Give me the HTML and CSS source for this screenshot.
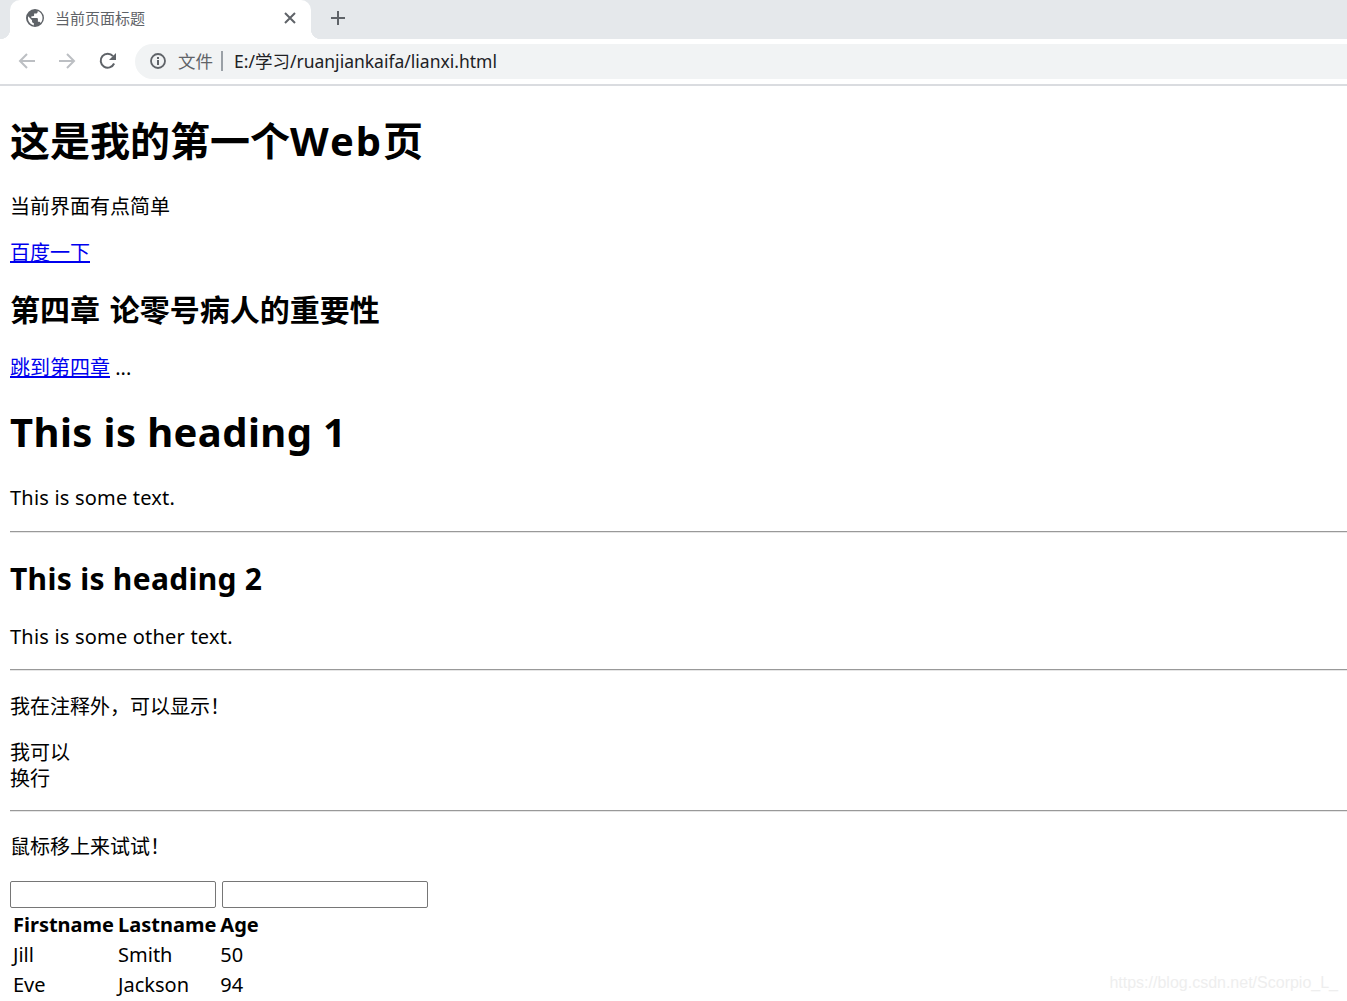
FILE: index.html
```html
<!DOCTYPE html>
<html lang="zh-CN">

<head>
    <meta charset="UTF-8">
    <meta name="viewport" content="width=device-width, initial-scale=1.0">
    <title>当前页面标题</title>
    <link rel="stylesheet" href="styles.css">
</head>

<body>
    <!-- Browser chrome -->
    <div class="tabstrip">
        <div class="tab">
            <svg class="tab-icon" width="20" height="20" viewBox="0 0 20 20">
                <path fill="#5f6368" fill-rule="evenodd" d="M10 1a9 9 0 1 0 0 18 9 9 0 0 0 0-18zM3.200 8.300L7 12.200v1c0 1 .8 1.800 1.800 1.800v2.500A7.600 7.600 0 0 1 3.200 8.300zm12.300 6.800c-.2-.8-.9-1.300-1.700-1.300h-.9v-2.900c0-.5-.4-.9-.9-.9H6.400V8.200h1.800c.5 0 .9-.4.900-.9V5.500h1.800c1 0 1.800-.8 1.800-1.800v-.8a7.600 7.600 0 0 1 2.800 12.200z" />
            </svg>
            <span class="tab-title">当前页面标题</span>
            <svg class="tab-close" width="14" height="14" viewBox="0 0 14 14">
                <path stroke="#5f6368" stroke-width="2" d="M2 2l10 10M12 2L2 12" />
            </svg>
        </div>
        <svg class="new-tab" width="16" height="16" viewBox="0 0 16 16">
            <path stroke="#5f6368" stroke-width="2" d="M8 1v14M1 8h14" />
        </svg>
    </div>

    <div class="toolbar">
        <svg class="nav-icon" width="20" height="20" viewBox="0 0 20 20">
            <path fill="none" stroke="#bcbfc3" stroke-width="2" d="M18 10H3M10 3l-7 7 7 7" />
        </svg>
        <svg class="nav-icon" width="20" height="20" viewBox="0 0 20 20">
            <path fill="none" stroke="#bcbfc3" stroke-width="2" d="M2 10h15M10 3l7 7-7 7" />
        </svg>
        <svg class="nav-icon reload" width="20" height="20" viewBox="0 0 20 20">
            <path fill="none" stroke="#5f6368" stroke-width="2" d="M16.100 12.500A7 7 0 1 1 15 5.100" />
            <path fill="#5f6368" d="M18 2v7h-7z" />
        </svg>
        <div class="omnibox">
            <svg width="18" height="18" viewBox="0 0 18 18">
                <circle cx="9" cy="9" r="7" fill="none" stroke="#5f6368" stroke-width="1.800" />
                <path fill="#5f6368" d="M8 8h2v5H8zM8 5h2v2H8z" />
            </svg>
            <span class="scheme">文件</span>
            <span class="sep"></span>
            <span class="url">E:/学习/ruanjiankaifa/lianxi.html</span>
        </div>
    </div>

    <!-- Isi halaman -->
    <div class="page">
        <h1 class="first">这是我的第一个<span class="web">Web</span>页</h1>
        <p>当前界面有点简单</p>
        <p><a href="#">百度一下</a></p>
        <h2 class="spaced">第四章 论零号病人的重要性</h2>
        <p><a href="#">跳到第四章</a> ...</p>
        <h1 class="en">This is heading 1</h1>
        <p class="en">This is some text.</p>
        <hr>
        <h2 class="en">This is heading 2</h2>
        <p class="en tight">This is some other text.</p>
        <hr>
        <p class="after-rule">我在注释外，可以显示！</p>
        <p class="tighter">我可以<br>换行</p>
        <hr>
        <p class="after-rule low" title="鼠标移上来试试">鼠标移上来试试！</p>
        <form class="name-form">
            <input type="text">
            <input type="text">
        </form>
        <table>
            <tr>
                <th>Firstname</th>
                <th>Lastname</th>
                <th>Age</th>
            </tr>
            <tr>
                <td>Jill</td>
                <td>Smith</td>
                <td>50</td>
            </tr>
            <tr>
                <td>Eve</td>
                <td>Jackson</td>
                <td>94</td>
            </tr>
        </table>
    </div>

    <div class="watermark">https://blog.csdn.net/Scorpio_L_</div>
</body>

</html>
```

FILE: styles.css
```css
html,
body {
    height: 100%;
    overflow: hidden;
}

body {
    margin: 0;
    position: relative;
    background-color: #ffffff;
    color: #000000;
    font-family: "Noto Sans", "Noto Sans CJK SC", sans-serif;
    font-size: 20px;
    line-height: 26px;
}

/* Browser chrome */
.tabstrip {
    display: flex;
    align-items: center;
    height: 39px;
    padding-left: 10px;
    background-color: #e5e8eb;
}

.tab {
    position: relative;
    display: flex;
    align-items: center;
    box-sizing: border-box;
    width: 301px;
    height: 39px;
    padding: 0 14px 3px 15px;
    background-color: #ffffff;
    border-radius: 10px 10px 0 0;
}

.tab::before,
.tab::after {
    content: "";
    position: absolute;
    bottom: 0;
    width: 10px;
    height: 10px;
}

.tab::before {
    left: -10px;
    background: radial-gradient(circle at 0 0, #e5e8eb 10px, #ffffff 10.500px);
}

.tab::after {
    right: -10px;
    background: radial-gradient(circle at 100% 0, #e5e8eb 10px, #ffffff 10.500px);
}

.tab-title {
    flex: 1;
    margin-left: 10px;
    color: #5f6368;
    font-size: 15px;
    line-height: 20px;
}

.new-tab {
    margin: 0 0 3px 19px;
}

.toolbar {
    display: flex;
    align-items: center;
    box-sizing: border-box;
    height: 47px;
    padding: 0 0 1px 17px;
    border-bottom: 2px solid #dadce0;
}

.nav-icon {
    margin-right: 20px;
}

.reload {
    margin-left: 1px;
    margin-right: 19px;
}

.omnibox {
    display: flex;
    align-items: center;
    flex: 1;
    height: 35px;
    margin-left: -2px;
    padding-left: 14px;
    background-color: #f1f3f4;
    border-radius: 18px 0 0 18px;
    font-size: 17.500px;
}

.scheme {
    margin-left: 11px;
    color: #5f6368;
}

.sep {
    width: 2px;
    height: 20px;
    margin: 0 11px 0 8px;
    background-color: #9aa0a6;
}

.url {
    color: #202124;
}

/* Isi halaman */
.page {
    padding-left: 10px;
}

h1 {
    margin: 24px 0 27px;
    font-size: 40px;
    line-height: 53px;
}

h1.first {
    margin-top: 28px;
}

h2 {
    margin: 24px 0 25px;
    font-size: 30px;
    line-height: 40px;
}

p {
    margin: 20px 0;
}

hr {
    margin: 20px 0;
    border: none;
    border-top: 1px solid #999999;
    border-bottom: 1px solid #e6e6e6;
}

hr + h2 {
    margin-top: 26px;
}

.en {
    letter-spacing: 0.01em;
}

.web {
    letter-spacing: 2px;
}

.spaced {
    word-spacing: 2px;
}

.tight {
    margin-bottom: 19px;
}

.tighter {
    margin-bottom: 18px;
}

.tight + hr,
.tighter + hr {
    margin-top: 0;
}

.after-rule {
    margin-top: 23px;
}

.after-rule.low {
    margin-top: 22px;
    margin-bottom: 21px;
}

.name-form {
    display: flex;
    gap: 6px;
}

input {
    box-sizing: border-box;
    width: 206px;
    height: 27px;
    padding: 1px 2px;
    border: 1px solid #767676;
    border-radius: 2px;
}

table {
    margin-top: 1px;
    border-spacing: 2.500px;
}

th,
td {
    padding: 1px;
    text-align: left;
}

.watermark {
    position: absolute;
    right: 9px;
    bottom: 7px;
    color: #eeeeee;
    font-family: "Liberation Sans", sans-serif;
    font-size: 16px;
    line-height: 22px;
}
```
